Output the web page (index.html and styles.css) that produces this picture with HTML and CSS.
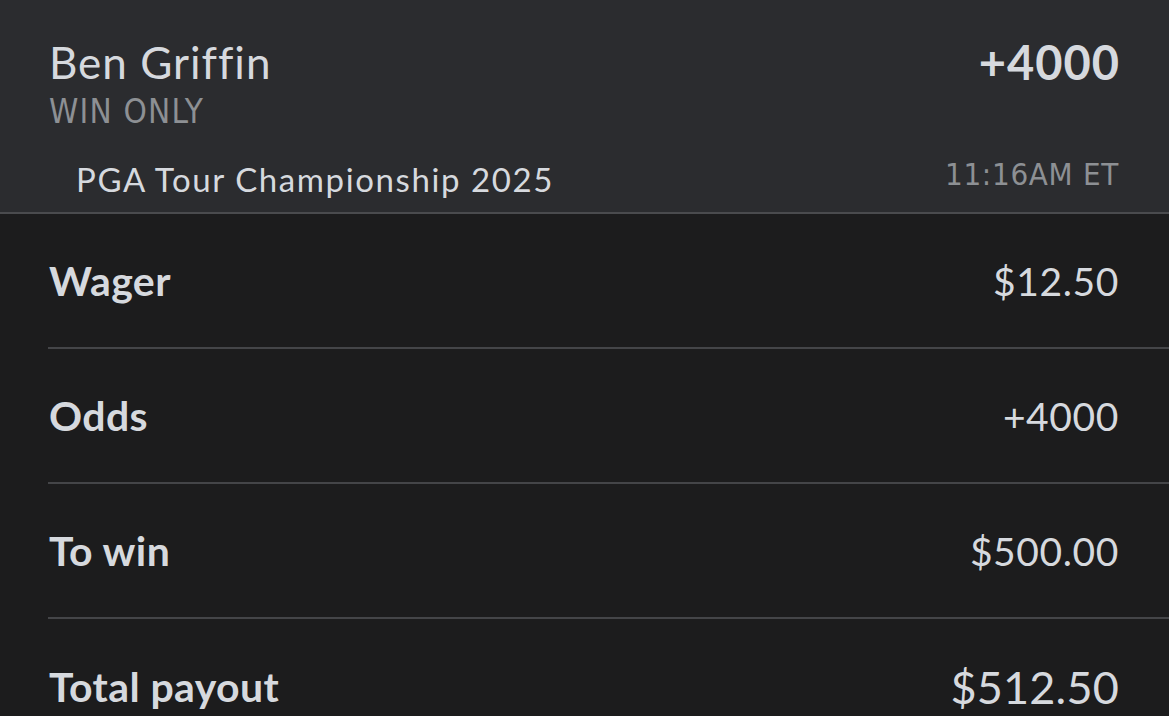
FILE: index.html
```html
<!DOCTYPE html>
<html lang="en">
<head>
<meta charset="utf-8">
<title>Bet slip</title>
<link rel="stylesheet" href="styles.css">
</head>
<body>
  <div class="slip">
    <header class="slip-head">
      <div class="head-top">
        <div class="selection">Ben Griffin</div>
        <div class="head-odds">+4000</div>
      </div>
      <div class="market">WIN ONLY</div>
      <div class="head-event">
        <div class="event-name">PGA Tour Championship 2025</div>
        <div class="event-time">11:16AM ET</div>
      </div>
    </header>
    <section class="details">
      <div class="row">
        <div class="label">Wager</div>
        <div class="value">$12.50</div>
      </div>
      <div class="row">
        <div class="label">Odds</div>
        <div class="value">+4000</div>
      </div>
      <div class="row">
        <div class="label">To win</div>
        <div class="value">$500.00</div>
      </div>
      <div class="row row-total">
        <div class="label">Total payout</div>
        <div class="value value-total">$512.50</div>
      </div>
    </section>
  </div>
</body>
</html>
```

FILE: styles.css
```css
html, body {
  margin: 0;
  padding: 0;
  background: #1c1c1d;
}

body {
  font-family: "Lato", "Open Sans", sans-serif;
  color: #d6d9de;
  overflow: hidden;
  font-variant-ligatures: none;
}

.slip {
  width: 1169px;
}

.slip-head {
  box-sizing: border-box;
  height: 214px;
  background: #2b2c2f;
  border-bottom: 2px solid #4a4b4e;
  padding: 36px 50px 0 49px;
  display: flex;
  flex-direction: column;
}

.head-top {
  display: flex;
  justify-content: space-between;
  align-items: center;
  height: 52px;
}

.selection {
  font-size: 44px;
  font-weight: 400;
  line-height: 52px;
  letter-spacing: 1px;
}

.head-odds {
  font-size: 47px;
  font-weight: 700;
  line-height: 52px;
  letter-spacing: 1px;
  margin-right: -1px;
}

.market {
  font-family: "DejaVu Sans Condensed", "DejaVu Sans", sans-serif;
  font-stretch: condensed;
  font-size: 33px;
  line-height: 36px;
  letter-spacing: 1.2px;
  color: #8d9094;
  margin-top: 6px;
}

.head-event {
  display: flex;
  justify-content: space-between;
  align-items: center;
  margin-top: 26px;
  padding-left: 27px;
}

.event-name {
  font-size: 33px;
  line-height: 36px;
  letter-spacing: 1.6px;
}

.event-time {
  font-family: "DejaVu Sans Condensed", "DejaVu Sans", sans-serif;
  font-stretch: condensed;
  font-size: 31px;
  line-height: 36px;
  letter-spacing: 0.7px;
  color: #8d9094;
  padding-bottom: 9px;
}

.details {
  display: flex;
  flex-direction: column;
}

.row {
  box-sizing: border-box;
  height: 135px;
  margin-left: 48px;
  padding: 0 50px 0 1px;
  border-bottom: 2px solid #444548;
  display: flex;
  justify-content: space-between;
  align-items: center;
}

.row-total {
  border-bottom: none;
}

.label {
  font-size: 41px;
  font-weight: 700;
  letter-spacing: 0.4px;
}

.value {
  font-size: 39px;
  font-weight: 400;
  letter-spacing: 0.6px;
}

.value-total {
  font-size: 45px;
  letter-spacing: 0.2px;
}
```
